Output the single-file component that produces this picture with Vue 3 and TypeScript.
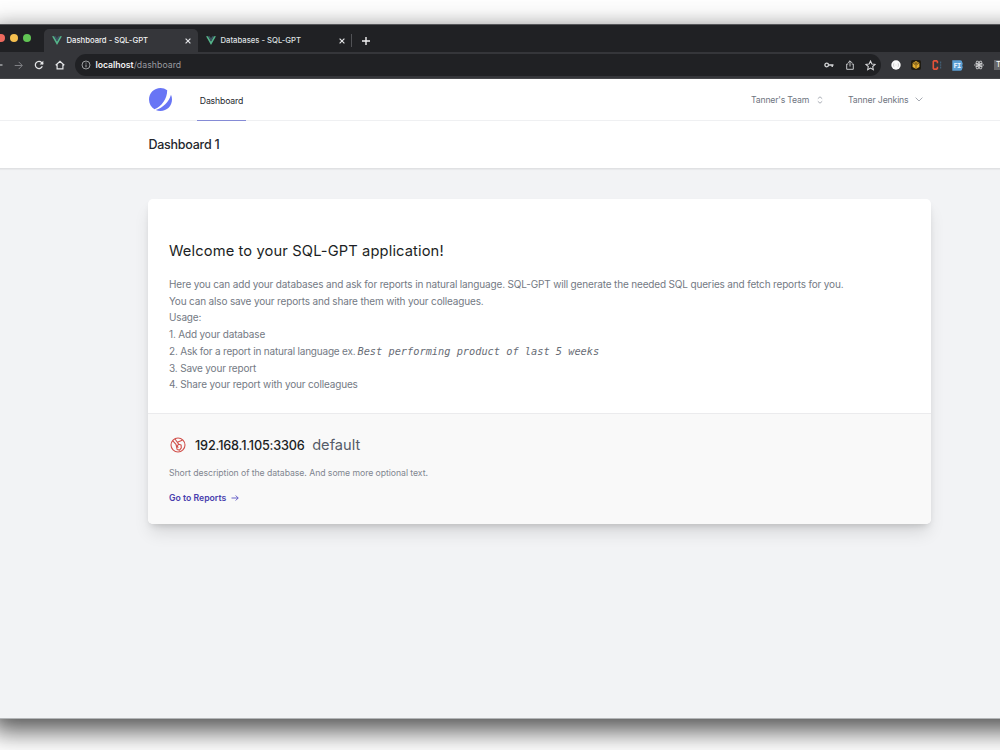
<script setup lang="ts">
interface Tab {
  title: string
  active: boolean
}
const tabs: Tab[] = [
  { title: 'Dashboard - SQL-GPT', active: true },
  { title: 'Databases - SQL-GPT', active: false },
]
</script>

<template>
  <div class="desktop">
    <div class="window">
      <div class="tabstrip">
        <div class="lights"><i class="red"></i><i class="yellow"></i><i class="green"></i></div>
        <div v-for="tab in tabs" :key="tab.title" class="tab" :class="{ active: tab.active }">
          <svg class="vue" viewBox="0 0 11 10"><path d="M0 .4h2.2L5.5 6.1 8.8.4H11L5.500 9.900z" fill="#55b58a" /><path d="M2.200.4h2L5.500 2.700 6.800.4h2L5.500 6.100z" fill="#3b5363" /></svg>
          <span class="tab-title">{{ tab.title }}</span>
          <svg class="close" viewBox="0 0 6 6"><path d="M.6.6l4.800 4.800M5.400.6L.6 5.400" stroke="#e4e5e7" stroke-width="1.150" /></svg>
        </div>
        <span class="separator"></span>
        <svg class="plus" viewBox="0 0 8 8"><path d="M4 0v8M0 4h8" stroke="#f1f1f2" stroke-width="1.400" /></svg>
      </div>

      <div class="toolbar">
        <svg class="back" viewBox="0 0 10 10"><path d="M1 5h8.500M5 1L1 5l4 4" fill="none" stroke="#dcdde0" stroke-width="1.200" /></svg>
        <svg class="forward" viewBox="0 0 10 10"><path d="M.8 5H9M5.200 1l4 4-4 4" fill="none" stroke="#828387" stroke-width="1.100" /></svg>
        <svg class="reload" viewBox="0 0 10 10"><path d="M8.300 6.300A3.600 3.600 0 1 1 7.700 2.600L9 4" fill="none" stroke="#e5e6e8" stroke-width="1.300" /><path d="M9.300.7v3.700H5.600z" fill="#e5e6e8" /></svg>
        <svg class="home" viewBox="0 0 10 10"><path d="M.7 5.200L5 1.200l4.300 4M2.100 4.300v4.600h5.800V4.300" fill="none" stroke="#e5e6e8" stroke-width="1.200" /></svg>
        <div class="omnibox">
          <svg class="info" viewBox="0 0 10 10"><circle cx="5" cy="5" r="4" fill="none" stroke="#a9abae" stroke-width=".9" /><path d="M5 4.500v2.800M5 2.600v1" stroke="#a9abae" stroke-width="1" /></svg>
          <span class="url"><b>localhost</b>/dashboard</span>
          <svg class="key" viewBox="0 0 10 10"><circle cx="2.700" cy="5" r="1.800" fill="none" stroke="#d4d5d7" stroke-width="1.300" /><path d="M4.500 5h5M8.200 5v2.100" fill="none" stroke="#d4d5d7" stroke-width="1.400" /></svg>
          <svg class="share" viewBox="0 0 10 10"><path d="M3.300 4H1.700v5.300h6.600V4H6.700M5 6.500V.9M2.900 2.900L5 .8l2.100 2.100" fill="none" stroke="#cfd0d3" stroke-width=".95" /></svg>
          <svg class="star" viewBox="0 0 10 10"><path d="M5 .9l1.250 2.700 2.950.35L7 5.950l.6 2.950L5 7.400 2.400 8.900 3 5.950.8 3.950l2.950-.35z" fill="none" stroke="#d7d8da" stroke-width=".95" /></svg>
        </div>
        <div class="extensions">
          <svg viewBox="0 0 10 10"><circle cx="5" cy="5" r="4.700" fill="#fafafa" /><path d="M3.300 3.200q-.8.1-.6 1T2.200 5q.7 0 .5.900t.6.900M6.700 3.200q.8.100.6 1t.5.800q-.7 0-.5.900t-.6.900M4.200 5h.4M5.500 5h.4" fill="none" stroke="#aaa" stroke-width=".5" /></svg>
          <svg viewBox="0 0 10 10"><rect width="10" height="10" rx="2" fill="#1e1b12" /><path d="M5 1.100l3.400 1.900v4L5 8.900 1.600 7V3z" fill="#e3ae30" /><path d="M1.800 3.100L5 5l3.200-1.900M5 5v3.700M3.300 2.100l3.400 2M6.700 2.100l-3.400 2" fill="none" stroke="#4b3813" stroke-width=".6" /></svg>
          <svg viewBox="0 0 10 10"><path d="M5.400 3.300V1.700L4.600.9H2.100l-.8.8v6.600l.8.8h2.500l.8-.8V6.700" fill="none" stroke="#e55239" stroke-width="1.600" /><path d="M8.700 1.500v2M8.700 4.300v1.500M8.700 6.600v1.900" stroke="#466882" stroke-width="1" /></svg>
          <svg class="fi" viewBox="0 0 11 11"><path d="M.3.300h7.900a2 2 0 0 1 2 2l.6 1.400-.6 1.800.6 1.700-.6 1.500a2 2 0 0 1-2 2H.3z" fill="#5b9fd3" /><text x="1.600" y="8">FI</text></svg>
          <svg viewBox="0 0 10 10"><g fill="none" stroke="#d5d6d8" stroke-width=".75"><ellipse cx="5" cy="5" rx="4.500" ry="1.800" /><ellipse cx="5" cy="5" rx="4.500" ry="1.800" transform="rotate(60 5 5)" /><ellipse cx="5" cy="5" rx="4.500" ry="1.800" transform="rotate(120 5 5)" /></g><circle cx="5" cy="5" r="1.200" fill="#d5d6d8" /></svg>
          <span class="text-ext">T</span>
        </div>
      </div>

      <nav class="nav">
        <svg class="logo" viewBox="0 0 48 48"><path d="M11.395 44.428C4.557 40.198 0 32.632 0 24 0 10.745 10.745 0 24 0a23.891 23.891 0 0113.997 4.502c-.200 17.907-11.097 33.245-26.602 39.926z" fill="#6875f5" /><path d="M14.134 45.885A23.914 23.914 0 0024 48c13.255 0 24-10.745 24-24 0-3.516-.756-6.856-2.115-9.866-4.659 15.143-16.608 27.092-31.751 31.751z" fill="#6875f5" /></svg>
        <a class="nav-link"><span>Dashboard</span></a>
        <div class="team"><span>Tanner's Team</span><svg viewBox="0 0 6 8"><path d="M.8 2.700L3 .8l2.200 1.900M.8 5.300L3 7.200l2.200-1.900" fill="none" stroke="#969ba4" stroke-width=".8" /></svg></div>
        <div class="user"><span>Tanner Jenkins</span><svg viewBox="0 0 8 5"><path d="M.6.600L4 4 7.400.600" fill="none" stroke="#969ba4" stroke-width=".85" /></svg></div>
      </nav>
      <header class="page-header"><h2>Dashboard 1</h2></header>

      <main>
        <section class="card">
          <div class="welcome">
            <h1>Welcome to your SQL-GPT application!</h1>
            <div class="copy">
              <p>Here you can add your databases and ask for reports in natural language. SQL-GPT will generate the needed SQL queries and fetch reports for you.</p>
              <p>You can also save your reports and share them with your colleagues.</p>
              <p>Usage:</p>
              <p>1. Add your database</p>
              <p class="example"><span>2. Ask for a report in natural language ex.</span><code>Best performing product of last 5 weeks</code></p>
              <p>3. Save your report</p>
              <p>4. Share your report with your colleagues</p>
            </div>
          </div>
          <div class="database">
            <div class="db-title">
              <svg viewBox="0 0 16 16" fill="none" stroke="#d1504b" stroke-width="1.100" stroke-linejoin="round"><circle cx="8" cy="8" r="7" /><path d="M2.600 3.600L6 7.300l1.100 5.200 2.500.6 1.700-2.200-.2-2.800-2.200-.8-1.700 1.300 1 2.300M5 2l2.300 3.200M7.300 5.200l3.700-1.500 1.600-.6M7.300 5.200l1.200 1.700" /></svg>
              <strong>192.168.1.105:3306</strong><span>default</span>
            </div>
            <p class="description">Short description of the database. And some more optional text.</p>
            <a class="reports"><span>Go to Reports</span><svg viewBox="0 0 8 8"><path d="M.5 4h6.700M4.700 1.500L7.200 4 4.700 6.500" fill="none" stroke="#5850c2" stroke-width=".9" /></svg></a>
          </div>
        </section>
      </main>
    </div>
  </div>
</template>

<style>
body { margin: 0; background: #fff; }
</style>

<style scoped>
* { box-sizing: border-box; }
.desktop { width: 1000px; height: 750px; padding-top: 24px; overflow: hidden; background: #fff; font-family: Inter, "Liberation Sans", sans-serif; }
svg { display: block; flex: none; }
h1, h2, p { margin: 0; font-weight: 400; }
span, strong, p, h1, h2 { white-space: nowrap; }
.window { width: 1060px; height: 695px; margin-left: -8px; padding-left: 8px; display: flex; flex-direction: column; background: #f2f3f5; border-top: 1px solid #555659; border-bottom: 1px solid #b3b5b7; box-shadow: 0 13px 24px rgba(0, 0, 0, .58), 0 0 22px rgba(0, 0, 0, .25); }
.tabstrip, .toolbar, .nav, .page-header { margin-left: -8px; padding-left: 8px; flex: none; }
.tabstrip { height: 27px; display: flex; background: #202124; }
.lights { width: 44px; display: flex; gap: 5px; padding-top: 9px; margin-left: -3px; }
.lights i { width: 8px; height: 8px; border-radius: 50%; }
.red { background: #ed6a5e; }
.yellow { background: #f5bf4f; }
.green { background: #61c554; }
.tab { width: 154px; height: 23px; margin-top: 4px; padding: 0 7.500px 0 7.500px; display: flex; align-items: center; border-radius: 5px 5px 0 0; color: #dfe0e2; }
.lights + .tab { margin-left: 3px; }
.active { background: #35363a; color: #f0f1f2; }
.vue { width: 10px; height: 9px; margin-right: 5px; }
.tab-title { font-size: 7.7px; font-weight: 500; }
.close { width: 6px; height: 6px; margin-left: auto; }
.separator { width: 1px; height: 13px; margin: 9px 10px 0 -1px; background: #515256; }
.plus { width: 8px; height: 8px; margin-top: 12px; }
.toolbar { height: 27px; display: flex; align-items: center; background: #35363a; border-bottom: 1px solid #47484b; }
.back { width: 10px; height: 10px; margin-left: -7px; }
.forward { width: 9px; height: 9px; margin-left: 11px; }
.reload { width: 10px; height: 10px; margin-left: 11px; }
.home { width: 10px; height: 10px; margin-left: 11px; }
.omnibox { width: 806px; height: 22px; margin-left: 10px; padding: 0 5.500px; display: flex; align-items: center; border-radius: 11px; background: #202124; }
.info { width: 10px; height: 10px; }
.url { margin-left: 5px; font-size: 8.700px; letter-spacing: .06px; color: #9b9ca0; }
.url b { font-weight: 600; letter-spacing: -.03px; color: #f0f0f1; }
.key { width: 10px; height: 10px; margin-left: auto; }
.share { width: 10px; height: 10px; margin-left: 11px; }
.star { width: 11px; height: 11px; margin-left: 10px; }
.extensions { display: flex; align-items: center; gap: 10.400px; margin-left: 10px; }
.extensions svg { width: 10px; height: 10px; }
.extensions .fi { width: 11px; height: 11px; }
.fi text { font: 700 7px "DejaVu Sans Mono", monospace; letter-spacing: -.7px; fill: #e8f4ff; }
.text-ext { width: 12px; height: 10px; padding-left: 2px; background: #66676a; color: #fff; font-size: 7.500px; line-height: 10px; }
.nav { height: 42px; display: flex; align-items: center; background: #fff; border-bottom: 1px solid #eff0f2; font-size: 8.700px; letter-spacing: -.15px; color: #6f757f; }
.logo { width: 23px; height: 23px; margin-left: 149px; }
.nav-link { align-self: stretch; width: 49px; margin: 0 0 -1px 25px; display: flex; align-items: center; justify-content: center; padding-top: 3px; border-bottom: 1.500px solid #858bd6; color: #24272e; }
.team { width: 97px; margin-left: 505px; display: flex; align-items: center; letter-spacing: -.2px; }
.team svg { width: 6px; height: 8px; margin-left: 7.500px; }
.user { display: flex; align-items: center; }
.user svg { width: 8px; height: 5px; margin-left: 6px; }
.page-header { height: 48px; background: #fff; border-bottom: 1px solid #e0e1e3; box-shadow: 0 1px 1px rgba(0,0,0,.04); }
.page-header h2 { margin-left: 148.500px; padding-top: 15px; font-size: 12.500px; line-height: 18px; font-weight: 500; letter-spacing: -.25px; color: #24272d; }
main { padding: 29.500px 0 0 148px; }
.card { width: 783px; height: 325.500px; overflow: hidden; border-radius: 5px; background: #fff; box-shadow: 0 11px 17px -3px rgba(0,0,0,.12), 0 4px 7px -3px rgba(0,0,0,.16); }
.welcome { height: 215.500px; padding: 42.500px 21px 0; border-bottom: 1px solid #ebebed; }
h1 { font-size: 14.700px; line-height: 20px; letter-spacing: .12px; color: #1c1f25; }
.copy { margin-top: 15px; font-size: 10px; line-height: 16.720px; letter-spacing: -.16px; color: #747a84; }
.example { display: flex; }
.example span { letter-spacing: -.2px; }
.example code { margin-left: 2px; font-family: "DejaVu Sans Mono", monospace; font-size: 10.300px; font-style: italic; letter-spacing: 0; color: #686d76; }
.database { height: 110px; padding: 20px 21px 0; background: #f9f9f9; }
.db-title { height: 22px; display: flex; align-items: center; color: #1c1f25; }
.db-title svg { width: 16px; height: 16px; margin-left: 1px; }
.db-title strong { margin-left: 9px; font-size: 12.700px; font-weight: 500; letter-spacing: -.17px; }
.db-title span { margin-left: 7.500px; font-size: 14.600px; color: #555c68; }
.description { margin-top: 10px; font-size: 8.700px; line-height: 14px; letter-spacing: -.06px; color: #818690; }
.reports { margin-top: 10.500px; height: 14px; display: flex; align-items: center; font-size: 8.700px; font-weight: 600; color: #493fae; }
.reports svg { width: 8px; height: 8px; margin-left: 5px; }
</style>
